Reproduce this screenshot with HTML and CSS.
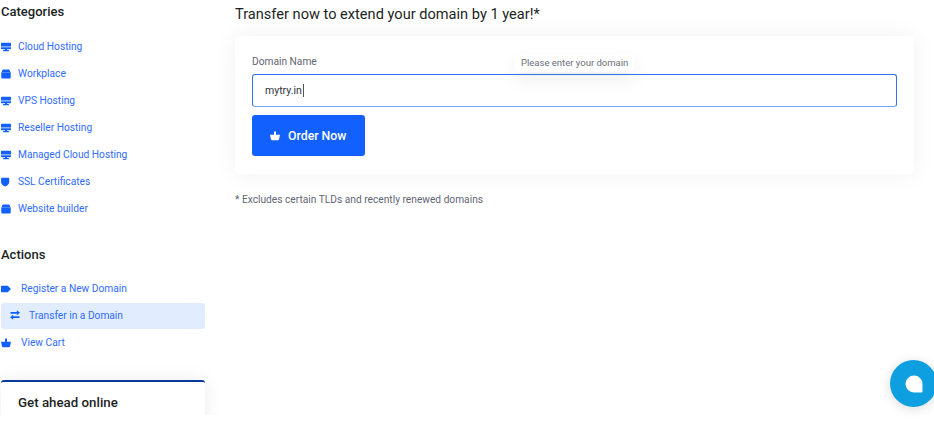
FILE: index.html
```html
<!DOCTYPE html>
<html lang="en">
  <head>
    <meta charset="UTF-8" />
    <title>Transfer a Domain</title>
    <link rel="stylesheet" href="styles.css">
  </head>
  <body>
    <svg class="defs" width="0" height="0">
      <symbol id="i-server" viewBox="0 0 12 12">
        <path d="M.8 1h10.400a.8.8 0 0 1 .8.8v3.500H0V1.800A.8.8 0 0 1 .8 1zM0 6.200h12v1.700a.8.8 0 0 1-.8.8H7.200v.9h2.300V11h-7V9.600h2.300v-.9H.8a.8.8 0 0 1-.8-.8z" />
      </symbol>
      <symbol id="i-box" viewBox="0 0 12 12">
        <path d="M3 .6h6a1.700 1.700 0 0 1 1.600 1.200L11.100 3.500H.9l.5-1.700A1.700 1.700 0 0 1 3 .6zM.3 3.900h11.400v6.300a1.300 1.300 0 0 1-1.300 1.300H1.600a1.300 1.300 0 0 1-1.300-1.300z" />
      </symbol>
      <symbol id="i-shield" viewBox="0 0 12 12">
        <path d="M.6 1h8.800a.5.500 0 0 1 .5.500V6.400c0 2.300-2.300 3.900-4.900 5.100C2.400 10.300.1 8.700.1 6.400V1.500A.5.500 0 0 1 .6 1z" />
      </symbol>
      <symbol id="i-tag" viewBox="0 0 12 12">
        <path d="M.8 2h7.400l3.700 4-3.700 4H.8A.8.8 0 0 1 0 9.200V2.800A.8.8 0 0 1 .8 2z" />
      </symbol>
      <symbol id="i-swap" viewBox="0 0 12 12">
        <path d="M8.200.4L12 3.400 8.200 6.400V4.400H.6V2.400h7.600zM3.800 5.600L0 8.600l3.800 3v-2h7.600v-2H3.800z" />
      </symbol>
      <symbol id="i-basket" viewBox="0 0 12 12">
        <path d="M4.800.6h2.400v3.800h4.300c.3 0 .5.200.4.500l-1 4.900a1.600 1.600 0 0 1-1.500 1.300H2.600a1.600 1.600 0 0 1-1.500-1.300l-1-4.900c-.1-.3.100-.5.400-.5h4.300z" />
      </symbol>
    </svg>

    <div class="page">
      <aside class="sidebar">
        <h3 class="side-title">Categories</h3>
        <ul class="menu">
          <li><a href="#"><svg class="icon"><use href="#i-server" /></svg>Cloud Hosting</a></li>
          <li><a href="#"><svg class="icon"><use href="#i-box" /></svg>Workplace</a></li>
          <li><a href="#"><svg class="icon"><use href="#i-server" /></svg>VPS Hosting</a></li>
          <li><a href="#"><svg class="icon"><use href="#i-server" /></svg>Reseller Hosting</a></li>
          <li><a href="#"><svg class="icon"><use href="#i-server" /></svg>Managed Cloud Hosting</a></li>
          <li><a href="#"><svg class="icon"><use href="#i-shield" /></svg>SSL Certificates</a></li>
          <li><a href="#"><svg class="icon"><use href="#i-box" /></svg>Website builder</a></li>
        </ul>

        <h3 class="side-title actions-title">Actions</h3>
        <ul class="menu actions">
          <li><a href="#"><svg class="icon"><use href="#i-tag" /></svg>Register a New Domain</a></li>
          <li class="active"><a href="#"><svg class="icon"><use href="#i-swap" /></svg>Transfer in a Domain</a></li>
          <li><a href="#"><svg class="icon"><use href="#i-basket" /></svg>View Cart</a></li>
        </ul>

        <div class="promo">
          <h4>Get ahead online</h4>
        </div>
      </aside>

      <main class="content">
        <h1>Transfer now to extend your domain by 1 year!*</h1>

        <div class="card">
          <label for="domain">Domain Name</label>
          <div class="field">
            <div class="domain-input" id="domain">mytry.in<span class="caret"></span></div>
            <div class="tip">Please enter your domain</div>
          </div>
          <button class="order-btn"><svg class="icon"><use href="#i-basket" /></svg>Order Now</button>
        </div>

        <p class="note">* Excludes certain TLDs and recently renewed domains</p>
      </main>
    </div>

    <div class="chat">
      <svg width="18" height="18" viewBox="0 0 18 18"><path d="M9 .5a8.500 8.500 0 0 1 8.500 8.500v7.200a1.300 1.300 0 0 1-1.300 1.300H9A8.500 8.500 0 0 1 9 .5z" fill="#fff" /></svg>
    </div>
  </body>
</html>
```

FILE: styles.css
```css
html,
body {
  margin: 0;
  height: 100%;
  overflow: hidden;
  background: #fff;
}
body {
  font-family: Roboto, "Liberation Sans", sans-serif;
  color: #1c1f24;
}
.defs {
  display: block;
  height: 0;
}
.page {
  display: flex;
  height: 415px;
  overflow: hidden;
  padding-left: 1px;
}

/* sidebar */
.sidebar {
  width: 204px;
  flex-shrink: 0;
}
.side-title {
  margin: 0;
  padding-top: 3px;
  font-size: 13px;
  line-height: 17px;
  font-weight: 500;
}
.actions-title {
  padding-top: 24px;
}
.menu {
  list-style: none;
  margin: 13px 0 0;
  padding: 0;
}
.menu li {
  height: 27px;
}
.menu a {
  display: flex;
  align-items: center;
  height: 100%;
  font-size: 10.2px;
  color: #2f6bff;
  text-decoration: none;
}
.icon {
  width: 10px;
  height: 10px;
  margin-right: 7px;
  fill: #1261ff;
  flex-shrink: 0;
}
.actions {
  margin-top: 12px;
}
.actions .icon {
  margin-right: 10px;
}
.actions .active {
  height: 26px;
  margin-top: 1px;
  background: #e1edff;
  border-radius: 3px;
}
.actions .active a {
  height: 24px;
  padding-left: 9px;
}
.actions .active .icon {
  margin-right: 9px;
}
.promo {
  margin-top: 24px;
  height: 60px;
  padding: 12px 17px;
  border-top: 2px solid #0a3a9e;
  border-radius: 3px 3px 0 0;
  box-sizing: border-box;
  background: #fff;
  box-shadow: 0 0 18px rgba(0, 0, 0, 0.08);
}
.promo h4 {
  margin: 0;
  font-size: 13.3px;
  line-height: 17px;
  font-weight: 500;
}

/* main */
.content {
  width: 679px;
  margin-left: 30px;
}
h1 {
  margin: 0;
  padding-top: 5px;
  font-size: 14.6px;
  line-height: 18px;
  font-weight: 400;
}
.card {
  margin-top: 13px;
  height: 138px;
  box-sizing: border-box;
  padding: 19px 17px 0;
  background: #fff;
  border-radius: 5px;
  box-shadow: 0 0 24px rgba(0, 0, 0, 0.06);
}
label {
  display: block;
  font-size: 10.2px;
  line-height: 13px;
  color: #5f6672;
}
.field {
  position: relative;
  margin-top: 6px;
}
.domain-input {
  display: flex;
  align-items: center;
  height: 33px;
  box-sizing: border-box;
  padding-left: 12px;
  border: 1px solid #2f72f5;
  border-bottom-color: #76a5ff;
  border-radius: 3px;
  font-size: 10.5px;
  color: #30343b;
}
.caret {
  width: 1px;
  height: 13px;
  margin-left: 1px;
  background: #555;
}
.tip {
  position: absolute;
  left: 263px;
  top: -20px;
  padding: 0 6px;
  height: 18px;
  line-height: 17px;
  font-size: 9.5px;
  color: #6a6f78;
  background: #fff;
  border-radius: 4px;
  box-shadow: 0 8px 18px rgba(0, 0, 0, 0.07);
}
.order-btn {
  display: flex;
  align-items: center;
  margin-top: 8px;
  width: 113px;
  height: 41px;
  padding: 0 0 0 18px;
  border: 0;
  border-radius: 3px;
  background: #1261ff;
  color: #fff;
  font-family: inherit;
  font-size: 12.3px;
  font-weight: 500;
}
.order-btn .icon {
  fill: #fff;
  margin-right: 8px;
}
.note {
  margin: 19px 0 0;
  font-size: 10.2px;
  line-height: 13px;
  color: #5f6672;
}

/* chat bubble */
.chat {
  position: fixed;
  left: 890px;
  top: 360px;
  width: 47px;
  height: 47px;
  display: flex;
  align-items: center;
  justify-content: center;
  border-radius: 50%;
  background: #0d9fe0;
  box-shadow: 0 2px 12px rgba(0, 0, 0, 0.14);
}
```
